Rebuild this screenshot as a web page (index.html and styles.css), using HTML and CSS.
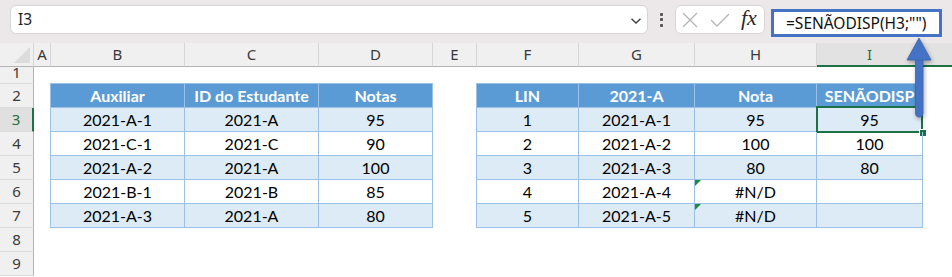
FILE: index.html
```html
<!DOCTYPE html>
<html lang="pt">
<head>
<meta charset="utf-8">
<title>SENÃODISP</title>
<link rel="stylesheet" href="styles.css">
</head>
<body>
<div class="app">
  <div class="topbar">
    <div class="namebox">
      <span class="ref">I3</span>
      <svg class="chev" width="12" height="8" viewBox="0 0 12 8"><path d="M1.5 1.8 L6 6 L10.5 1.8" fill="none" stroke="#3c3c3c" stroke-width="1.3"/></svg>
    </div>
    <div class="dots"><i></i><i></i><i></i></div>
    <div class="fxbox">
      <svg class="ic-x" width="16" height="16" viewBox="0 0 16 16"><path d="M1 1 L15 15 M15 1 L1 15" stroke="#b4b4b4" stroke-width="1.3" fill="none"/></svg>
      <svg class="ic-ok" width="20" height="14" viewBox="0 0 20 14"><path d="M1 7 L7 13 L19 1" stroke="#b4b4b4" stroke-width="1.3" fill="none"/></svg>
      <span class="fx">fx</span>
    </div>
    <div class="formula">=SENÃODISP(H3;"")</div>
  </div>

  <div class="sheet">
    <div class="row colhdr">
      <div class="corner"><span class="tri"></span></div>
      <div class="ch">A</div>
      <div class="ch">B</div>
      <div class="ch">C</div>
      <div class="ch">D</div>
      <div class="ch">E</div>
      <div class="ch">F</div>
      <div class="ch">G</div>
      <div class="ch">H</div>
      <div class="ch sel">I</div>
      <div class="ch sel tail"></div>
    </div>

    <div class="row r1">
      <div class="rh first-row">1</div>
    </div>

    <div class="row">
      <div class="rh">2</div><div class="c"></div>
      <div class="t th first top">Auxiliar</div>
      <div class="t th top">ID do Estudante</div>
      <div class="t th top">Notas</div>
      <div class="c"></div>
      <div class="t th first top">LIN</div>
      <div class="t th top">2021-A</div>
      <div class="t th top">Nota</div>
      <div class="t th top">SENÃODISP</div>
    </div>

    <div class="row">
      <div class="rh act">3</div><div class="c"></div>
      <div class="t alt first">2021-A-1</div>
      <div class="t alt">2021-A</div>
      <div class="t alt">95</div>
      <div class="c"></div>
      <div class="t alt first">1</div>
      <div class="t alt">2021-A-1</div>
      <div class="t alt">95</div>
      <div class="t alt cur">95<span class="selbox"></span><span class="handle"></span></div>
    </div>

    <div class="row">
      <div class="rh">4</div><div class="c"></div>
      <div class="t first">2021-C-1</div>
      <div class="t">2021-C</div>
      <div class="t">90</div>
      <div class="c"></div>
      <div class="t first">2</div>
      <div class="t">2021-A-2</div>
      <div class="t">100</div>
      <div class="t">100</div>
    </div>

    <div class="row">
      <div class="rh">5</div><div class="c"></div>
      <div class="t alt first">2021-A-2</div>
      <div class="t alt">2021-A</div>
      <div class="t alt">100</div>
      <div class="c"></div>
      <div class="t alt first">3</div>
      <div class="t alt">2021-A-3</div>
      <div class="t alt">80</div>
      <div class="t alt">80</div>
    </div>

    <div class="row">
      <div class="rh">6</div><div class="c"></div>
      <div class="t first">2021-B-1</div>
      <div class="t">2021-B</div>
      <div class="t">85</div>
      <div class="c"></div>
      <div class="t first">4</div>
      <div class="t">2021-A-4</div>
      <div class="t err">#N/D</div>
      <div class="t"></div>
    </div>

    <div class="row">
      <div class="rh">7</div><div class="c"></div>
      <div class="t alt first">2021-A-3</div>
      <div class="t alt">2021-A</div>
      <div class="t alt">80</div>
      <div class="c"></div>
      <div class="t alt first">5</div>
      <div class="t alt">2021-A-5</div>
      <div class="t alt err">#N/D</div>
      <div class="t alt"></div>
    </div>

    <div class="row">
      <div class="rh">8</div>
    </div>
    <div class="row">
      <div class="rh">9</div>
    </div>
  </div>

  <svg class="arrow" width="30" height="84" viewBox="0 0 30 84">
    <rect x="11.5" y="20" width="7.5" height="61" rx="3.7" fill="#4472c4" stroke="#3b64ad" stroke-width="0.8"/>
    <path d="M15 2 L27 24 L3 24 Z" fill="#4472c4" stroke="#3b64ad" stroke-width="0.8" stroke-linejoin="round"/>
  </svg>
</div>
</body>
</html>
```

FILE: styles.css
```css
html, body {
  margin: 0;
  padding: 0;
  background: #ffffff;
}

.app {
  position: relative;
  width: 952px;
  height: 277px;
  overflow: hidden;
  font-family: "Noto Sans", "Open Sans", sans-serif;
}

/* ---------- formula bar ---------- */
.topbar {
  height: 43px;
  background: #ece7e8;
  display: flex;
  align-items: flex-start;
  box-sizing: border-box;
  padding-top: 5px;
}

.namebox {
  margin-left: 10px;
  width: 638px;
  height: 29px;
  box-sizing: border-box;
  background: #ffffff;
  border: 1px solid #d9d5d6;
  border-radius: 6px;
  display: flex;
  align-items: center;
  justify-content: space-between;
  padding: 0 5px 0 7px;
}

.ref {
  font-size: 15.5px;
  color: #222;
  line-height: 1;
}

.chev {
  display: block;
  margin-top: 2px;
}

.dots {
  width: 27px;
  height: 29px;
  display: flex;
  flex-direction: column;
  align-items: center;
  justify-content: center;
  gap: 2.5px;
}

.dots i {
  display: block;
  width: 3px;
  height: 3px;
  background: #555;
  border-radius: 1px;
}

.fxbox {
  width: 90px;
  height: 29px;
  box-sizing: border-box;
  background: #ffffff;
  border: 1px solid #d9d5d6;
  border-radius: 6px;
  display: flex;
  align-items: center;
  padding-left: 6px;
}

.ic-x { display: block; }
.ic-ok { display: block; margin-left: 12px; margin-top: 1px; }

.fx {
  font-family: "Liberation Serif", "DejaVu Serif", serif;
  font-style: italic;
  font-size: 22px;
  color: #2a2a2a;
  margin-left: 11px;
  margin-top: -4px;
  letter-spacing: 0;
}

.formula {
  margin-left: 6px;
  margin-top: 4px;
  width: 171px;
  height: 28px;
  box-sizing: border-box;
  border: 3px solid #4472c4;
  background: #ffffff;
  font-size: 15.5px;
  color: #111;
  line-height: 22px;
  padding-left: 12px;
  white-space: nowrap;
}

/* ---------- grid ---------- */
.row {
  display: grid;
  grid-template-columns: 34px 17px 134px 134px 114px 44px 102px 116px 122px 106px 1fr;
  height: 24px;
}

.row.r1 { height: 17px; }

.ch {
  background: #f0f0f0;
  border-right: 1px solid #d6d6d6;
  border-bottom: 1px solid #b3b3b3;
  box-sizing: border-box;
  text-align: center;
  font-size: 15px;
  line-height: 23px;
  color: #3a3a3a;
}

.ch.sel {
  background: #e2e2e2;
  color: #1e7145;
  border-bottom: 2px solid #1e7145;
  line-height: 22px;
}

.ch.tail { border-right: none; }

.corner {
  position: relative;
  background: #f0f0f0;
  border-right: 1px solid #d6d6d6;
  border-bottom: 1px solid #b3b3b3;
  box-sizing: border-box;
}

.tri {
  position: absolute;
  right: 3px;
  bottom: 3px;
  width: 0;
  height: 0;
  border-left: 16px solid transparent;
  border-bottom: 16px solid #dcdcdc;
}

.rh {
  background: #f0f0f0;
  border-right: 1px solid #b3b3b3;
  border-bottom: 1px solid #dcdcdc;
  box-sizing: border-box;
  text-align: center;
  font-size: 15px;
  line-height: 23px;
  color: #3a3a3a;
}

.rh.first-row {
  line-height: 10px;
}

.rh.act {
  background: #e0e0e0;
  color: #1e7145;
  border-right: 2px solid #1e7145;
}

.t {
  position: relative;
  box-sizing: border-box;
  border-right: 1px solid #9bc2e6;
  border-bottom: 1px solid #9bc2e6;
  text-align: center;
  font-family: Lato, "Liberation Sans", sans-serif;
  font-size: 16px;
  line-height: 23px;
  color: #000;
  white-space: nowrap;
}

.t.first { box-shadow: -1px 0 0 #9bc2e6; }
.t.top { box-shadow: 0 -1px 0 #9bc2e6; }
.t.first.top { box-shadow: -1px 0 0 #9bc2e6, 0 -1px 0 #9bc2e6, -1px -1px 0 #9bc2e6; }

.t.th {
  background: #5b9bd5;
  color: #ffffff;
  font-weight: 700;
}

.t.alt { background: #ddebf7; }

.t.err::before {
  content: "";
  position: absolute;
  left: 0;
  top: 0;
  width: 0;
  height: 0;
  border-top: 6px solid #1e8a3c;
  border-right: 6px solid transparent;
}

.selbox {
  position: absolute;
  left: -1px;
  top: -2px;
  right: -1px;
  bottom: -2px;
  border: 2px solid #1e7145;
}

.handle {
  position: absolute;
  right: -4px;
  bottom: -5px;
  width: 6px;
  height: 6px;
  background: #1e7145;
  box-shadow: 0 0 0 1px #ffffff;
}

.arrow {
  position: absolute;
  left: 904px;
  top: 36px;
  filter: drop-shadow(1px 2px 2px rgba(0, 0, 0, 0.35));
}
```
